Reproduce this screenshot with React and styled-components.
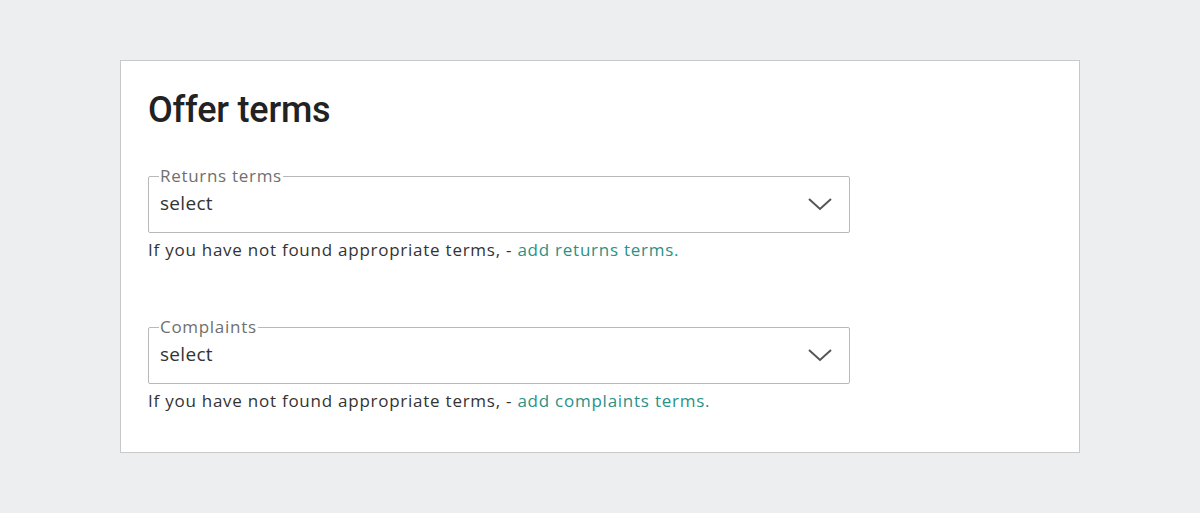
import React from "react";
import styled, { createGlobalStyle } from "styled-components";

const GlobalStyle = createGlobalStyle`
  html, body {
    margin: 0;
    padding: 0;
    background: #edeef0;
  }
  body {
    font-family: "Open Sans", "Liberation Sans", sans-serif;
  }
`;

const Page = styled.div`
  padding: 60px 120px;
  min-height: 513px;
  box-sizing: border-box;
`;

const Card = styled.section`
  background: #fff;
  border: 1px solid #c8c9cb;
  height: 393px;
  box-sizing: border-box;
  padding: 27px 27px 0 27px;
`;

const Title = styled.h1`
  margin: 0 0 36px 0;
  font-family: Roboto, "Liberation Sans", sans-serif;
  font-weight: 500;
  font-size: 36px;
  line-height: 44px;
  color: #222;
  letter-spacing: -0.2px;
`;

const Field = styled.div`
  width: 702px;
  margin-bottom: ${(p) => p.$gap || 0}px;
`;

const Box = styled.fieldset`
  margin: 0;
  padding: 0 12px 10px 11px;
  border: 1px solid #b9b9b9;
  border-radius: 2px;
  height: 65px;
  box-sizing: border-box;
  display: flex;
  align-items: center;
  justify-content: space-between;
`;

const Legend = styled.legend`
  padding: 0 1px;
  margin-left: -1px;
  font-size: 17px;
  line-height: 16px;
  letter-spacing: 0.7px;
  color: #6f6f6f;
`;

const Value = styled.span`
  font-size: 19px;
  letter-spacing: 0.3px;
  color: #333;
`;

const Chevron = styled.svg`
  width: 26px;
  height: 16px;
  margin-top: 2px;
  margin-right: 4px;
`;

const Help = styled.p`
  margin: 6px 0 0 0;
  font-size: 17px;
  line-height: 22px;
  letter-spacing: 0.75px;
  color: #333;
`;

const Link = styled.a`
  color: #2a9186;
  text-decoration: none;
`;

const Select = ({ label }) => (
  <Box>
    <Legend>{label}</Legend>
    <Value>select</Value>
    <Chevron viewBox="0 0 26 16">
      <path d="M2 3 L13 13 L24 3" fill="none" stroke="#555" strokeWidth="2" />
    </Chevron>
  </Box>
);

export default function App() {
  return (
    <>
      <GlobalStyle />
      <Page>
        <Card>
          <Title>Offer terms</Title>
          <Field $gap={58}>
            <Select label="Returns terms" />
            <Help>
              If you have not found appropriate terms, -{" "}
              <Link href="#">add returns terms.</Link>
            </Help>
          </Field>
          <Field>
            <Select label="Complaints" />
            <Help>
              If you have not found appropriate terms, -{" "}
              <Link href="#">add complaints terms.</Link>
            </Help>
          </Field>
        </Card>
      </Page>
    </>
  );
}
